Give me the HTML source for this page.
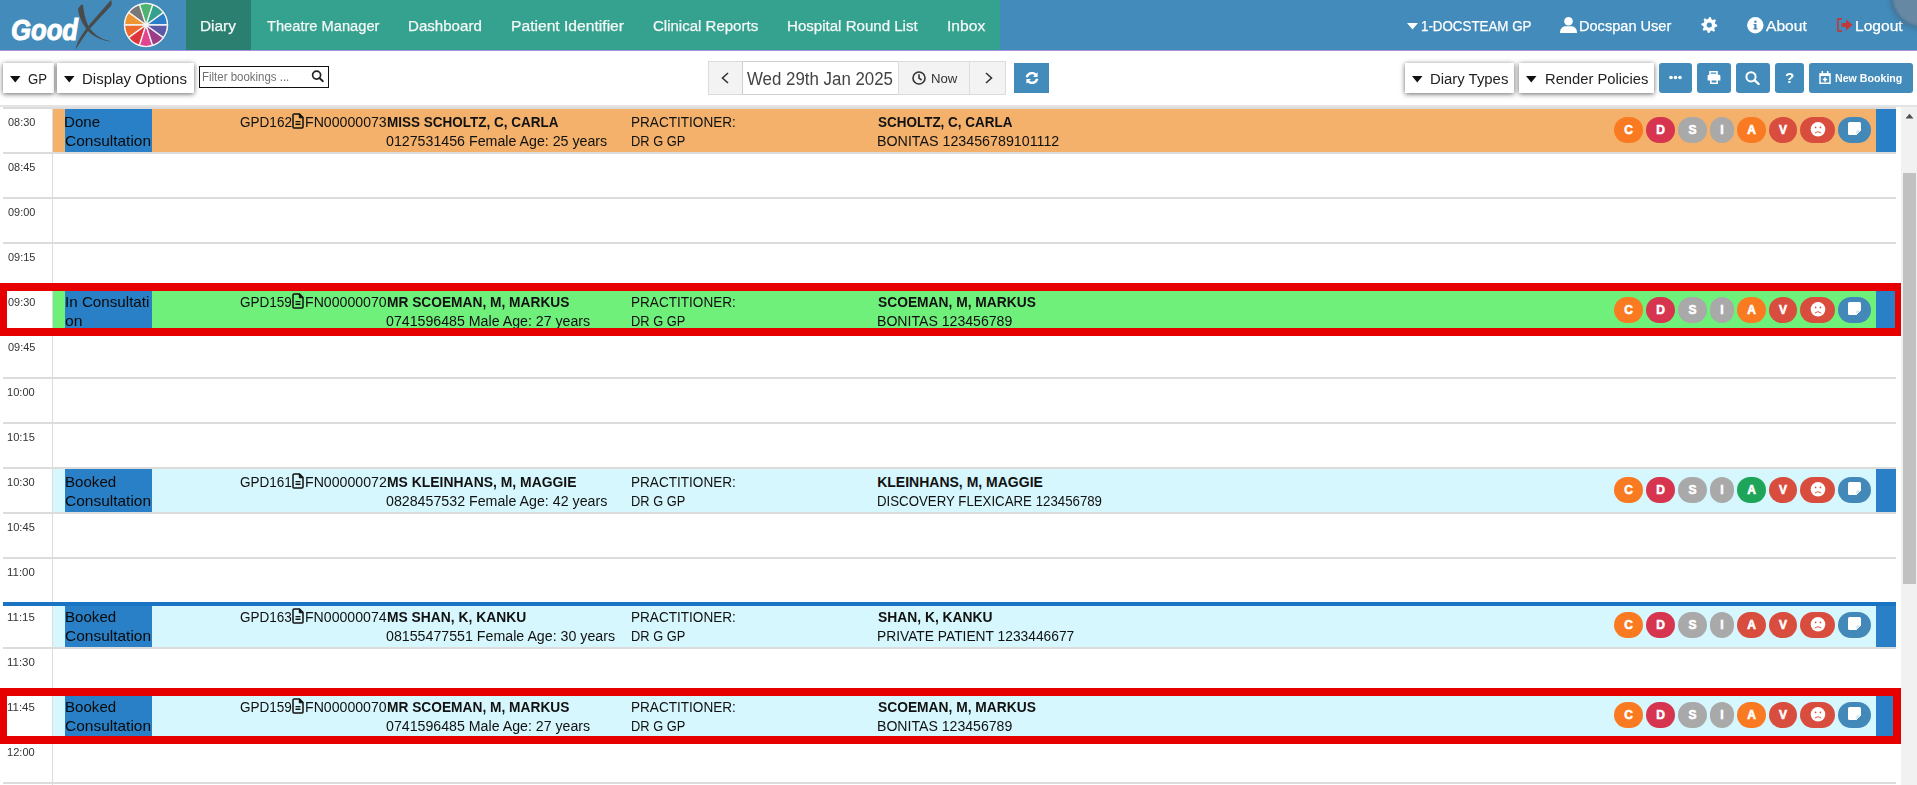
<!DOCTYPE html><html><head><meta charset="utf-8"><title>GoodX Diary</title><style>*{margin:0;padding:0;box-sizing:border-box}
html,body{width:1917px;height:785px;overflow:hidden;background:#fff;font-family:"Liberation Sans",sans-serif}
.a{position:absolute}
.t{position:absolute;line-height:0;white-space:nowrap;transform-origin:0 0}
.ic{height:26px;border-radius:13px;color:#fff;font-weight:700;font-size:12px;-webkit-text-stroke:0.6px #fff;line-height:26px;text-align:center}
</style></head><body><div class="a" style="left:0px;top:0px;width:1917px;height:50px;background:#428bba;"></div>
<div class="a" style="left:0px;top:50px;width:1917px;height:1px;background:#a692dc;"></div>
<div class="a" style="left:186px;top:0px;width:65px;height:50px;background:#2a7f70;"></div>
<div class="a" style="left:251px;top:0px;width:749px;height:50px;background:#35a18f;"></div>
<svg class="a" style="left:0;top:0" width="180" height="50" viewBox="0 0 180 50"><text x="11" y="40" font-family="Liberation Sans" font-weight="700" font-style="italic" font-size="29" fill="#fff" stroke="#fff" stroke-width="1" textLength="67" lengthAdjust="spacingAndGlyphs">Good</text><path d="M78,9 C80,5 82,4 83,5 C84,12 85,20 89,27 C95,36 103,40 112,41.5 C104,41 95,38 88,31 C82,24 79,16 78,9 Z" fill="#4a4a4a"/><path d="M111,0 C112,2 112,4 111,6 C105,12 96,22 88,31 C83,38 79,44 75.5,49.5 C77,43 80,37 86,29 C94,19 103,9 111,0 Z" fill="#4a4a4a"/><path d="M146,25 L167.50,25.00 A21.5,21.5 0 0 0 163.39,12.36 Z" fill="#2a7fc6" stroke="#f4f4f4" stroke-width="1.3"/><path d="M146,25 L163.39,12.36 A21.5,21.5 0 0 0 152.64,4.55 Z" fill="#35a08e" stroke="#f4f4f4" stroke-width="1.3"/><path d="M146,25 L152.64,4.55 A21.5,21.5 0 0 0 139.36,4.55 Z" fill="#4cb46e" stroke="#f4f4f4" stroke-width="1.3"/><path d="M146,25 L139.36,4.55 A21.5,21.5 0 0 0 128.61,12.36 Z" fill="#777777" stroke="#f4f4f4" stroke-width="1.3"/><path d="M146,25 L128.61,12.36 A21.5,21.5 0 0 0 124.50,25.00 Z" fill="#ef9433" stroke="#f4f4f4" stroke-width="1.3"/><path d="M146,25 L124.50,25.00 A21.5,21.5 0 0 0 128.61,37.64 Z" fill="#ee6a2c" stroke="#f4f4f4" stroke-width="1.3"/><path d="M146,25 L128.61,37.64 A21.5,21.5 0 0 0 139.36,45.45 Z" fill="#dd3539" stroke="#f4f4f4" stroke-width="1.3"/><path d="M146,25 L139.36,45.45 A21.5,21.5 0 0 0 152.64,45.45 Z" fill="#e2458f" stroke="#f4f4f4" stroke-width="1.3"/><path d="M146,25 L152.64,45.45 A21.5,21.5 0 0 0 163.39,37.64 Z" fill="#9c3e86" stroke="#f4f4f4" stroke-width="1.3"/><path d="M146,25 L163.39,37.64 A21.5,21.5 0 0 0 167.50,25.00 Z" fill="#5a5aa8" stroke="#f4f4f4" stroke-width="1.3"/><circle cx="146" cy="25" r="21.5" fill="none" stroke="#f0f0f0" stroke-width="1"/></svg>
<span class="t" style="left:200.37px;top:25.50px;font-size:15.5px;color:#f4f8f7;transform:scaleX(0.9928);-webkit-text-stroke:0.25px #f4f8f7;">Diary</span>
<span class="t" style="left:267.01px;top:25.50px;font-size:15.5px;color:#f4f8f7;transform:scaleX(0.9456);-webkit-text-stroke:0.25px #f4f8f7;">Theatre Manager</span>
<span class="t" style="left:408.49px;top:25.50px;font-size:15.5px;color:#f4f8f7;transform:scaleX(0.9735);-webkit-text-stroke:0.25px #f4f8f7;">Dashboard</span>
<span class="t" style="left:511.25px;top:25.50px;font-size:15.5px;color:#f4f8f7;transform:scaleX(1.0089);-webkit-text-stroke:0.25px #f4f8f7;">Patient Identifier</span>
<span class="t" style="left:653.15px;top:25.50px;font-size:15.5px;color:#f4f8f7;transform:scaleX(0.9687);-webkit-text-stroke:0.25px #f4f8f7;">Clinical Reports</span>
<span class="t" style="left:787.39px;top:25.50px;font-size:15.5px;color:#f4f8f7;transform:scaleX(0.9724);-webkit-text-stroke:0.25px #f4f8f7;">Hospital Round List</span>
<span class="t" style="left:947.09px;top:25.50px;font-size:15.5px;color:#f4f8f7;transform:scaleX(1.0097);-webkit-text-stroke:0.25px #f4f8f7;">Inbox</span>
<span class="t" style="left:1420.50px;top:25.50px;font-size:15px;color:#fff;transform:scaleX(0.8892);-webkit-text-stroke:0.25px #fff;">1-DOCSTEAM GP</span>
<span class="t" style="left:1579.43px;top:25.50px;font-size:15.5px;color:#fff;transform:scaleX(0.9398);-webkit-text-stroke:0.25px #fff;">Docspan User</span>
<span class="t" style="left:1766.40px;top:25.50px;font-size:15.5px;color:#fff;transform:scaleX(1.0055);-webkit-text-stroke:0.25px #fff;">About</span>
<span class="t" style="left:1854.75px;top:25.50px;font-size:15.5px;color:#fff;transform:scaleX(1.0058);-webkit-text-stroke:0.25px #fff;">Logout</span>
<svg class="a" style="left:1407px;top:23px" width="11" height="7"><path d="M0,0 H11 L5.5,6.5 Z" fill="#fff"/></svg>
<svg class="a" style="left:1560px;top:17px" width="17" height="16" viewBox="0 0 17 16"><circle cx="8.5" cy="4.3" r="4.3" fill="#fff"/><path d="M0,16 C0,11 3,9.3 6,9.3 H11 C14,9.3 17,11 17,16 Z" fill="#fff"/></svg>
<svg class="a" style="left:1701px;top:17px" width="17" height="16" viewBox="0 0 17 16"><path d="M16.30,8.00 L16.15,9.56 L13.84,10.30 L13.29,11.33 L13.96,13.66 L12.74,14.65 L10.60,13.54 L9.47,13.88 L8.30,16.00 L6.74,15.85 L6.00,13.54 L4.97,12.99 L2.64,13.66 L1.65,12.44 L2.76,10.30 L2.42,9.17 L0.30,8.00 L0.45,6.44 L2.76,5.70 L3.31,4.67 L2.64,2.34 L3.86,1.35 L6.00,2.46 L7.13,2.12 L8.30,0.00 L9.86,0.15 L10.60,2.46 L11.63,3.01 L13.96,2.34 L14.95,3.56 L13.84,5.70 L14.18,6.83 Z" fill="#fff"/><circle cx="8.3" cy="8" r="2.6" fill="#428bba"/></svg>
<svg class="a" style="left:1747px;top:17px" width="17" height="17" viewBox="0 0 17 17"><circle cx="8.3" cy="8.3" r="8.2" fill="#fff"/><rect x="7.3" y="7" width="2.2" height="5.2" fill="#428bba"/><rect x="6.3" y="11.2" width="4.2" height="1.2" fill="#428bba"/><rect x="6.5" y="7" width="2" height="1.1" fill="#428bba"/><circle cx="8.4" cy="4.8" r="1.2" fill="#428bba"/></svg>
<svg class="a" style="left:1837px;top:18px" width="17" height="14" viewBox="0 0 17 14"><path d="M5,0.8 H2 Q0.8,0.8 0.8,2 V12 Q0.8,13.2 2,13.2 H5" fill="none" stroke="#c0393b" stroke-width="1.7"/><path d="M4.5,5 H9 V1.5 L15.5,7 L9,12.5 V9 H4.5 Z" fill="#c0393b"/></svg>
<div class="a" style="left:1893px;top:-32px;width:58px;height:58px;border-radius:50%;background:#6688a2;box-shadow:0 0 4px 3px rgba(70,95,120,0.6);filter:blur(1px)"></div>
<div class="a" style="left:3px;top:63px;width:51px;height:30px;background:#fff;box-shadow:0 1px 5px 0 rgba(0,0,0,0.6);"></div>
<div class="a" style="left:57px;top:63px;width:137px;height:30px;background:#fff;box-shadow:0 1px 5px 0 rgba(0,0,0,0.6);"></div>
<svg class="a" style="left:10px;top:76px" width="11" height="7"><path d="M0,0 H10.5 L5.25,6.6 Z" fill="#111"/></svg>
<svg class="a" style="left:64px;top:76px" width="11" height="7"><path d="M0,0 H10.5 L5.25,6.6 Z" fill="#111"/></svg>
<span class="t" style="left:28.04px;top:78.80px;font-size:14px;color:#222;transform:scaleX(0.9400);">GP</span>
<span class="t" style="left:82.30px;top:78.80px;font-size:14px;color:#222;transform:scaleX(1.0699);">Display Options</span>
<div class="a" style="left:199px;top:66px;width:130px;height:22px;background:#fff;border:1.5px solid #111;"></div>
<span class="t" style="left:201.78px;top:77.20px;font-size:12px;color:#727272;transform:scaleX(0.9554);">Filter bookings ...</span>
<svg class="a" style="left:311px;top:70px" width="14" height="13" viewBox="0 0 14 13"><circle cx="5.6" cy="5.1" r="4" fill="none" stroke="#222" stroke-width="1.7"/><path d="M8.4,8 L11.9,11.2" stroke="#222" stroke-width="1.9" stroke-linecap="round"/></svg>
<div class="a" style="left:708px;top:61px;width:35px;height:34px;background:#f3f3f3;border:1px solid #dcdcdc;"></div>
<div class="a" style="left:742px;top:61px;width:157px;height:34px;background:#fff;border:1px solid #cfcfcf;"></div>
<div class="a" style="left:898px;top:61px;width:72px;height:34px;background:#f3f3f3;border:1px solid #dcdcdc;"></div>
<div class="a" style="left:969px;top:61px;width:37px;height:34px;background:#f3f3f3;border:1px solid #dcdcdc;"></div>
<svg class="a" style="left:720px;top:72px" width="10" height="12" viewBox="0 0 10 12"><path d="M8,1 L2.5,6 L8,11" fill="none" stroke="#333" stroke-width="1.6"/></svg>
<svg class="a" style="left:984px;top:72px" width="10" height="12" viewBox="0 0 10 12"><path d="M2,1 L7.5,6 L2,11" fill="none" stroke="#333" stroke-width="1.6"/></svg>
<span class="t" style="left:746.92px;top:79.40px;font-size:17.5px;color:#444;transform:scaleX(0.9637);">Wed 29th Jan 2025</span>
<svg class="a" style="left:912px;top:71px" width="15" height="14" viewBox="0 0 15 14"><circle cx="7" cy="7" r="6" fill="none" stroke="#333" stroke-width="1.6"/><path d="M7,3.3 V7.2 L9.6,9" fill="none" stroke="#333" stroke-width="1.6"/></svg>
<span class="t" style="left:931.34px;top:79.00px;font-size:12.5px;color:#333;transform:scaleX(1.0556);">Now</span>
<div class="a" style="left:1014px;top:63px;width:35px;height:30px;background:#428bba;"></div>
<svg class="a" style="left:1025px;top:72px" width="14" height="12" viewBox="0 0 14 12"><path d="M1.8,5.2 A5.3,5.3 0 0 1 11,3" fill="none" stroke="#fff" stroke-width="2.4"/><path d="M12.6,0.3 V5 H8 Z" fill="#fff"/><path d="M12.2,6.8 A5.3,5.3 0 0 1 3,9" fill="none" stroke="#fff" stroke-width="2.4"/><path d="M1.4,11.7 V7 H6 Z" fill="#fff"/></svg>
<div class="a" style="left:1405px;top:63px;width:109px;height:30px;background:#fff;box-shadow:0 1px 5px 0 rgba(0,0,0,0.6);"></div>
<div class="a" style="left:1519px;top:63px;width:135px;height:30px;background:#fff;box-shadow:0 1px 5px 0 rgba(0,0,0,0.6);"></div>
<svg class="a" style="left:1412px;top:76px" width="11" height="7"><path d="M0,0 H10.5 L5.25,6.6 Z" fill="#111"/></svg>
<svg class="a" style="left:1526px;top:76px" width="11" height="7"><path d="M0,0 H10.5 L5.25,6.6 Z" fill="#111"/></svg>
<span class="t" style="left:1429.51px;top:78.60px;font-size:14px;color:#222;transform:scaleX(1.0634);">Diary Types</span>
<span class="t" style="left:1544.62px;top:78.60px;font-size:14px;color:#222;transform:scaleX(1.0533);">Render Policies</span>
<div class="a" style="left:1659px;top:63px;width:33px;height:30px;background:#428bba;border-radius:3px;"></div>
<div class="a" style="left:1697px;top:63px;width:34px;height:30px;background:#428bba;border-radius:3px;"></div>
<div class="a" style="left:1736px;top:63px;width:34px;height:30px;background:#428bba;border-radius:3px;"></div>
<div class="a" style="left:1775px;top:63px;width:29px;height:30px;background:#428bba;border-radius:3px;"></div>
<div class="a" style="left:1809px;top:63px;width:104px;height:30px;background:#428bba;border-radius:3px;"></div>
<svg class="a" style="left:1669px;top:75px" width="13" height="5"><circle cx="2" cy="2.5" r="1.8" fill="#fff"/><circle cx="6.5" cy="2.5" r="1.8" fill="#fff"/><circle cx="11" cy="2.5" r="1.8" fill="#fff"/></svg>
<svg class="a" style="left:1707px;top:71px" width="14" height="13" viewBox="0 0 14 13"><path d="M3,0.8 H10 V3.5 H3 Z" fill="none" stroke="#fff" stroke-width="1.6"/><path d="M2,3.8 H12 Q13.4,3.8 13.4,5.2 V9.5 H11 V8 H3 V9.5 H0.6 V5.2 Q0.6,3.8 2,3.8 Z" fill="#fff"/><path d="M3.8,8.8 H10.2 V12.2 H3.8 Z" fill="none" stroke="#fff" stroke-width="1.6"/></svg>
<svg class="a" style="left:1745px;top:71px" width="15" height="14" viewBox="0 0 15 14"><circle cx="6" cy="5.8" r="4.6" fill="none" stroke="#fff" stroke-width="2"/><path d="M9.5,9.2 L13.6,13" stroke="#fff" stroke-width="2.3" stroke-linecap="round"/></svg>
<span class="t" style="left:1784.71px;top:78.00px;font-size:14px;font-weight:700;color:#fff;transform:scaleX(1.0924);">?</span>
<svg class="a" style="left:1819px;top:71px" width="12" height="13" viewBox="0 0 12 13"><path d="M1,3 H11 V12.2 H1 Z" fill="none" stroke="#fff" stroke-width="1.5"/><rect x="1" y="2.5" width="10" height="2.5" fill="#fff"/><rect x="2.6" y="0" width="1.5" height="3" fill="#fff"/><rect x="7.9" y="0" width="1.5" height="3" fill="#fff"/><path d="M6,6.3 V10.7 M3.8,8.5 H8.2" stroke="#fff" stroke-width="1.5"/></svg>
<span class="t" style="left:1835.31px;top:78.40px;font-size:11.5px;font-weight:700;color:#fff;transform:scaleX(0.9249);">New Booking</span>
<div class="a" style="left:0px;top:105px;width:1917px;height:2px;background:#e4e4e4;"></div>
<div class="a" style="left:52px;top:109px;width:1px;height:676px;background:#dcdcdc;"></div>
<div class="a" style="left:3px;top:107px;width:1893px;height:2px;background:#dcdcdc;"></div>
<div class="a" style="left:3px;top:152px;width:1893px;height:2px;background:#dcdcdc;"></div>
<div class="a" style="left:3px;top:197px;width:1893px;height:2px;background:#dcdcdc;"></div>
<div class="a" style="left:3px;top:242px;width:1893px;height:2px;background:#dcdcdc;"></div>
<div class="a" style="left:3px;top:287px;width:1893px;height:2px;background:#dcdcdc;"></div>
<div class="a" style="left:3px;top:332px;width:1893px;height:2px;background:#dcdcdc;"></div>
<div class="a" style="left:3px;top:377px;width:1893px;height:2px;background:#dcdcdc;"></div>
<div class="a" style="left:3px;top:422px;width:1893px;height:2px;background:#dcdcdc;"></div>
<div class="a" style="left:3px;top:467px;width:1893px;height:2px;background:#dcdcdc;"></div>
<div class="a" style="left:3px;top:512px;width:1893px;height:2px;background:#dcdcdc;"></div>
<div class="a" style="left:3px;top:557px;width:1893px;height:2px;background:#dcdcdc;"></div>
<div class="a" style="left:3px;top:602px;width:1893px;height:2px;background:#dcdcdc;"></div>
<div class="a" style="left:3px;top:647px;width:1893px;height:2px;background:#dcdcdc;"></div>
<div class="a" style="left:3px;top:692px;width:1893px;height:2px;background:#dcdcdc;"></div>
<div class="a" style="left:3px;top:737px;width:1893px;height:2px;background:#dcdcdc;"></div>
<div class="a" style="left:3px;top:782px;width:1893px;height:2px;background:#dcdcdc;"></div>
<span class="t" style="left:7.76px;top:122.00px;font-size:11px;color:#333;transform:scaleX(0.9934);">08:30</span>
<span class="t" style="left:7.76px;top:167.00px;font-size:11px;color:#333;transform:scaleX(0.9955);">08:45</span>
<span class="t" style="left:7.76px;top:212.00px;font-size:11px;color:#333;transform:scaleX(0.9934);">09:00</span>
<span class="t" style="left:7.76px;top:257.00px;font-size:11px;color:#333;transform:scaleX(0.9955);">09:15</span>
<span class="t" style="left:7.76px;top:302.00px;font-size:11px;color:#333;transform:scaleX(0.9934);">09:30</span>
<span class="t" style="left:7.76px;top:347.00px;font-size:11px;color:#333;transform:scaleX(0.9955);">09:45</span>
<span class="t" style="left:7.37px;top:392.00px;font-size:11px;color:#333;transform:scaleX(1.0080);">10:00</span>
<span class="t" style="left:7.37px;top:437.00px;font-size:11px;color:#333;transform:scaleX(1.0101);">10:15</span>
<span class="t" style="left:7.37px;top:482.00px;font-size:11px;color:#333;transform:scaleX(1.0080);">10:30</span>
<span class="t" style="left:7.37px;top:527.00px;font-size:11px;color:#333;transform:scaleX(1.0101);">10:45</span>
<span class="t" style="left:7.34px;top:572.00px;font-size:11px;color:#333;transform:scaleX(1.0406);">11:00</span>
<span class="t" style="left:7.34px;top:617.00px;font-size:11px;color:#333;transform:scaleX(1.0429);">11:15</span>
<span class="t" style="left:7.34px;top:662.00px;font-size:11px;color:#333;transform:scaleX(1.0406);">11:30</span>
<span class="t" style="left:7.34px;top:707.00px;font-size:11px;color:#333;transform:scaleX(1.0429);">11:45</span>
<span class="t" style="left:7.37px;top:752.00px;font-size:11px;color:#333;transform:scaleX(1.0080);">12:00</span>
<div class="a" style="left:53px;top:109px;width:1843px;height:43px;background:#f3b16b;"></div>
<div class="a" style="left:65px;top:109px;width:87px;height:43px;background:#2a80c6;"></div>
<div class="a" style="left:1876px;top:109px;width:20px;height:43px;background:#2a80c6;"></div>
<span class="t" style="left:64.29px;top:121.80px;font-size:14.5px;color:#0a0a0a;transform:scaleX(1.0413);">Done</span>
<span class="t" style="left:64.83px;top:140.60px;font-size:14.5px;color:#0a0a0a;transform:scaleX(1.0677);">Consultation</span>
<span class="t" style="left:240.32px;top:121.80px;font-size:14px;color:#111;transform:scaleX(0.9677);">GPD162</span>
<svg class="a" style="left:292px;top:113px" width="12" height="16" viewBox="0 0 12 16"><path d="M1.5,1 H7.5 L11,4.5 V14 Q11,15 10,15 H2 Q1,15 1,14 V2 Q1,1 2,1 Z" fill="none" stroke="#111" stroke-width="1.5"/><path d="M7.3,1 V4.8 H11" fill="#111" stroke="#111" stroke-width="1"/><path d="M3.5,8.6 H8.5 M3.5,11.2 H8.5" stroke="#111" stroke-width="1.4"/></svg>
<span class="t" style="left:304.87px;top:121.80px;font-size:14px;color:#111;transform:scaleX(1.0096);">FN00000073</span>
<span class="t" style="left:386.62px;top:121.80px;font-size:14px;font-weight:700;color:#111;transform:scaleX(0.9641);">MISS SCHOLTZ, C, CARLA</span>
<span class="t" style="left:386.23px;top:140.60px;font-size:14px;color:#111;transform:scaleX(1.0149);">0127531456 Female Age: 25 years</span>
<span class="t" style="left:631.41px;top:121.80px;font-size:14px;color:#111;transform:scaleX(0.9697);">PRACTITIONER:</span>
<span class="t" style="left:631.47px;top:140.60px;font-size:14px;color:#111;transform:scaleX(0.9186);">DR G GP</span>
<span class="t" style="left:877.70px;top:121.80px;font-size:14px;font-weight:700;color:#111;transform:scaleX(0.9622);">SCHOLTZ, C, CARLA</span>
<span class="t" style="left:877.36px;top:140.60px;font-size:14px;color:#111;transform:scaleX(1.0182);">BONITAS 123456789101112</span>
<div class="a ic" style="left:1614px;top:117px;width:29px;background:#fa7a22">C</div>
<div class="a ic" style="left:1646px;top:117px;width:29px;background:#d6344f">D</div>
<div class="a ic" style="left:1678px;top:117px;width:29px;background:#a9a9a9">S</div>
<div class="a ic" style="left:1710px;top:117px;width:24px;background:#a9a9a9">I</div>
<div class="a ic" style="left:1737px;top:117px;width:29px;background:#fa7a22">A</div>
<div class="a ic" style="left:1769px;top:117px;width:28px;background:#d94d3e">V</div>
<div class="a ic" style="left:1800px;top:117px;width:35px;background:#d94d3e"><svg style="position:absolute;left:9.5px;top:4.5px" width="16" height="15" viewBox="0 0 16 15"><circle cx="8" cy="7.3" r="7.3" fill="#fff"/><circle cx="5.6" cy="5.4" r="0.85" fill="#d94d3e"/><circle cx="10.4" cy="5.4" r="0.85" fill="#d94d3e"/><path d="M4.8,11 Q8,8.3 11.2,11" fill="none" stroke="#d94d3e" stroke-width="0.95"/></svg></div>
<div class="a ic" style="left:1838px;top:117px;width:33px;background:#4289ba"><svg style="position:absolute;left:10px;top:5px" width="14" height="14" viewBox="0 0 14 14"><path d="M1.5,0 H11.5 Q13,0 13,1.5 V8 L8,13 H1.5 Q0,13 0,11.5 V1.5 Q0,0 1.5,0 Z" fill="#fff"/><path d="M13,8 L8,13 V9.6 Q8,8 9.6,8 Z" fill="#cfe1f0" stroke="#fff" stroke-width="0.8"/></svg></div>
<div class="a" style="left:53px;top:289px;width:1843px;height:43px;background:#6ff07a;"></div>
<div class="a" style="left:65px;top:289px;width:87px;height:43px;background:#2a80c6;"></div>
<div class="a" style="left:1876px;top:289px;width:20px;height:43px;background:#2a80c6;"></div>
<span class="t" style="left:64.83px;top:301.80px;font-size:14.5px;color:#0a0a0a;transform:scaleX(1.0473);">In Consultati</span>
<span class="t" style="left:64.97px;top:320.60px;font-size:14.5px;color:#0a0a0a;transform:scaleX(1.0842);">on</span>
<span class="t" style="left:240.32px;top:301.80px;font-size:14px;color:#111;transform:scaleX(0.9664);">GPD159</span>
<svg class="a" style="left:292px;top:293px" width="12" height="16" viewBox="0 0 12 16"><path d="M1.5,1 H7.5 L11,4.5 V14 Q11,15 10,15 H2 Q1,15 1,14 V2 Q1,1 2,1 Z" fill="none" stroke="#111" stroke-width="1.5"/><path d="M7.3,1 V4.8 H11" fill="#111" stroke="#111" stroke-width="1"/><path d="M3.5,8.6 H8.5 M3.5,11.2 H8.5" stroke="#111" stroke-width="1.4"/></svg>
<span class="t" style="left:304.87px;top:301.80px;font-size:14px;color:#111;transform:scaleX(1.0087);">FN00000070</span>
<span class="t" style="left:386.61px;top:301.80px;font-size:14px;font-weight:700;color:#111;transform:scaleX(0.9813);">MR SCOEMAN, M, MARKUS</span>
<span class="t" style="left:386.23px;top:320.60px;font-size:14px;color:#111;transform:scaleX(1.0127);">0741596485 Male Age: 27 years</span>
<span class="t" style="left:631.41px;top:301.80px;font-size:14px;color:#111;transform:scaleX(0.9697);">PRACTITIONER:</span>
<span class="t" style="left:631.47px;top:320.60px;font-size:14px;color:#111;transform:scaleX(0.9186);">DR G GP</span>
<span class="t" style="left:877.69px;top:301.80px;font-size:14px;font-weight:700;color:#111;transform:scaleX(0.9854);">SCOEMAN, M, MARKUS</span>
<span class="t" style="left:877.37px;top:320.60px;font-size:14px;color:#111;transform:scaleX(1.0064);">BONITAS 123456789</span>
<div class="a ic" style="left:1614px;top:297px;width:29px;background:#fa7a22">C</div>
<div class="a ic" style="left:1646px;top:297px;width:29px;background:#d6344f">D</div>
<div class="a ic" style="left:1678px;top:297px;width:29px;background:#a9a9a9">S</div>
<div class="a ic" style="left:1710px;top:297px;width:24px;background:#a9a9a9">I</div>
<div class="a ic" style="left:1737px;top:297px;width:29px;background:#fa7a22">A</div>
<div class="a ic" style="left:1769px;top:297px;width:28px;background:#d94d3e">V</div>
<div class="a ic" style="left:1800px;top:297px;width:35px;background:#d94d3e"><svg style="position:absolute;left:9.5px;top:4.5px" width="16" height="15" viewBox="0 0 16 15"><circle cx="8" cy="7.3" r="7.3" fill="#fff"/><circle cx="5.6" cy="5.4" r="0.85" fill="#d94d3e"/><circle cx="10.4" cy="5.4" r="0.85" fill="#d94d3e"/><path d="M4.8,11 Q8,8.3 11.2,11" fill="none" stroke="#d94d3e" stroke-width="0.95"/></svg></div>
<div class="a ic" style="left:1838px;top:297px;width:33px;background:#4289ba"><svg style="position:absolute;left:10px;top:5px" width="14" height="14" viewBox="0 0 14 14"><path d="M1.5,0 H11.5 Q13,0 13,1.5 V8 L8,13 H1.5 Q0,13 0,11.5 V1.5 Q0,0 1.5,0 Z" fill="#fff"/><path d="M13,8 L8,13 V9.6 Q8,8 9.6,8 Z" fill="#cfe1f0" stroke="#fff" stroke-width="0.8"/></svg></div>
<div class="a" style="left:53px;top:469px;width:1843px;height:43px;background:#d6f7fd;"></div>
<div class="a" style="left:65px;top:469px;width:87px;height:43px;background:#2a80c6;"></div>
<div class="a" style="left:1876px;top:469px;width:20px;height:43px;background:#2a80c6;"></div>
<span class="t" style="left:64.99px;top:481.80px;font-size:14.5px;color:#0a0a0a;transform:scaleX(1.0414);">Booked</span>
<span class="t" style="left:64.83px;top:500.60px;font-size:14.5px;color:#0a0a0a;transform:scaleX(1.0677);">Consultation</span>
<span class="t" style="left:240.32px;top:481.80px;font-size:14px;color:#111;transform:scaleX(0.9664);">GPD161</span>
<svg class="a" style="left:292px;top:473px" width="12" height="16" viewBox="0 0 12 16"><path d="M1.5,1 H7.5 L11,4.5 V14 Q11,15 10,15 H2 Q1,15 1,14 V2 Q1,1 2,1 Z" fill="none" stroke="#111" stroke-width="1.5"/><path d="M7.3,1 V4.8 H11" fill="#111" stroke="#111" stroke-width="1"/><path d="M3.5,8.6 H8.5 M3.5,11.2 H8.5" stroke="#111" stroke-width="1.4"/></svg>
<span class="t" style="left:304.87px;top:481.80px;font-size:14px;color:#111;transform:scaleX(1.0114);">FN00000072</span>
<span class="t" style="left:386.60px;top:481.80px;font-size:14px;font-weight:700;color:#111;transform:scaleX(0.9945);">MS KLEINHANS, M, MAGGIE</span>
<span class="t" style="left:386.23px;top:500.60px;font-size:14px;color:#111;transform:scaleX(1.0154);">0828457532 Female Age: 42 years</span>
<span class="t" style="left:631.41px;top:481.80px;font-size:14px;color:#111;transform:scaleX(0.9697);">PRACTITIONER:</span>
<span class="t" style="left:631.47px;top:500.60px;font-size:14px;color:#111;transform:scaleX(0.9186);">DR G GP</span>
<span class="t" style="left:877.19px;top:481.80px;font-size:14px;font-weight:700;color:#111;">KLEINHANS, M, MAGGIE</span>
<span class="t" style="left:877.44px;top:500.60px;font-size:14px;color:#111;transform:scaleX(0.9469);">DISCOVERY FLEXICARE 123456789</span>
<div class="a ic" style="left:1614px;top:477px;width:29px;background:#fa7a22">C</div>
<div class="a ic" style="left:1646px;top:477px;width:29px;background:#d6344f">D</div>
<div class="a ic" style="left:1678px;top:477px;width:29px;background:#a9a9a9">S</div>
<div class="a ic" style="left:1710px;top:477px;width:24px;background:#a9a9a9">I</div>
<div class="a ic" style="left:1737px;top:477px;width:29px;background:#1fa55a">A</div>
<div class="a ic" style="left:1769px;top:477px;width:28px;background:#d94d3e">V</div>
<div class="a ic" style="left:1800px;top:477px;width:35px;background:#d94d3e"><svg style="position:absolute;left:9.5px;top:4.5px" width="16" height="15" viewBox="0 0 16 15"><circle cx="8" cy="7.3" r="7.3" fill="#fff"/><circle cx="5.6" cy="5.4" r="0.85" fill="#d94d3e"/><circle cx="10.4" cy="5.4" r="0.85" fill="#d94d3e"/><path d="M4.8,11 Q8,8.3 11.2,11" fill="none" stroke="#d94d3e" stroke-width="0.95"/></svg></div>
<div class="a ic" style="left:1838px;top:477px;width:33px;background:#4289ba"><svg style="position:absolute;left:10px;top:5px" width="14" height="14" viewBox="0 0 14 14"><path d="M1.5,0 H11.5 Q13,0 13,1.5 V8 L8,13 H1.5 Q0,13 0,11.5 V1.5 Q0,0 1.5,0 Z" fill="#fff"/><path d="M13,8 L8,13 V9.6 Q8,8 9.6,8 Z" fill="#cfe1f0" stroke="#fff" stroke-width="0.8"/></svg></div>
<div class="a" style="left:53px;top:604px;width:1843px;height:43px;background:#d6f7fd;"></div>
<div class="a" style="left:65px;top:604px;width:87px;height:43px;background:#2a80c6;"></div>
<div class="a" style="left:1876px;top:604px;width:20px;height:43px;background:#2a80c6;"></div>
<span class="t" style="left:64.99px;top:616.80px;font-size:14.5px;color:#0a0a0a;transform:scaleX(1.0414);">Booked</span>
<span class="t" style="left:64.83px;top:635.60px;font-size:14.5px;color:#0a0a0a;transform:scaleX(1.0677);">Consultation</span>
<span class="t" style="left:240.32px;top:616.80px;font-size:14px;color:#111;transform:scaleX(0.9651);">GPD163</span>
<svg class="a" style="left:292px;top:608px" width="12" height="16" viewBox="0 0 12 16"><path d="M1.5,1 H7.5 L11,4.5 V14 Q11,15 10,15 H2 Q1,15 1,14 V2 Q1,1 2,1 Z" fill="none" stroke="#111" stroke-width="1.5"/><path d="M7.3,1 V4.8 H11" fill="#111" stroke="#111" stroke-width="1"/><path d="M3.5,8.6 H8.5 M3.5,11.2 H8.5" stroke="#111" stroke-width="1.4"/></svg>
<span class="t" style="left:304.87px;top:616.80px;font-size:14px;color:#111;transform:scaleX(1.0078);">FN00000074</span>
<span class="t" style="left:386.60px;top:616.80px;font-size:14px;font-weight:700;color:#111;transform:scaleX(0.9883);">MS SHAN, K, KANKU</span>
<span class="t" style="left:386.23px;top:635.60px;font-size:14px;color:#111;transform:scaleX(1.0147);">08155477551 Female Age: 30 years</span>
<span class="t" style="left:631.41px;top:616.80px;font-size:14px;color:#111;transform:scaleX(0.9697);">PRACTITIONER:</span>
<span class="t" style="left:631.47px;top:635.60px;font-size:14px;color:#111;transform:scaleX(0.9186);">DR G GP</span>
<span class="t" style="left:877.68px;top:616.80px;font-size:14px;font-weight:700;color:#111;transform:scaleX(0.9887);">SHAN, K, KANKU</span>
<span class="t" style="left:877.40px;top:635.60px;font-size:14px;color:#111;transform:scaleX(0.9851);">PRIVATE PATIENT 1233446677</span>
<div class="a ic" style="left:1614px;top:612px;width:29px;background:#fa7a22">C</div>
<div class="a ic" style="left:1646px;top:612px;width:29px;background:#d6344f">D</div>
<div class="a ic" style="left:1678px;top:612px;width:29px;background:#a9a9a9">S</div>
<div class="a ic" style="left:1710px;top:612px;width:24px;background:#a9a9a9">I</div>
<div class="a ic" style="left:1737px;top:612px;width:29px;background:#d94d3e">A</div>
<div class="a ic" style="left:1769px;top:612px;width:28px;background:#d94d3e">V</div>
<div class="a ic" style="left:1800px;top:612px;width:35px;background:#d94d3e"><svg style="position:absolute;left:9.5px;top:4.5px" width="16" height="15" viewBox="0 0 16 15"><circle cx="8" cy="7.3" r="7.3" fill="#fff"/><circle cx="5.6" cy="5.4" r="0.85" fill="#d94d3e"/><circle cx="10.4" cy="5.4" r="0.85" fill="#d94d3e"/><path d="M4.8,11 Q8,8.3 11.2,11" fill="none" stroke="#d94d3e" stroke-width="0.95"/></svg></div>
<div class="a ic" style="left:1838px;top:612px;width:33px;background:#4289ba"><svg style="position:absolute;left:10px;top:5px" width="14" height="14" viewBox="0 0 14 14"><path d="M1.5,0 H11.5 Q13,0 13,1.5 V8 L8,13 H1.5 Q0,13 0,11.5 V1.5 Q0,0 1.5,0 Z" fill="#fff"/><path d="M13,8 L8,13 V9.6 Q8,8 9.6,8 Z" fill="#cfe1f0" stroke="#fff" stroke-width="0.8"/></svg></div>
<div class="a" style="left:53px;top:694px;width:1843px;height:43px;background:#d6f7fd;"></div>
<div class="a" style="left:65px;top:694px;width:87px;height:43px;background:#2a80c6;"></div>
<div class="a" style="left:1876px;top:694px;width:20px;height:43px;background:#2a80c6;"></div>
<span class="t" style="left:64.99px;top:706.80px;font-size:14.5px;color:#0a0a0a;transform:scaleX(1.0414);">Booked</span>
<span class="t" style="left:64.83px;top:725.60px;font-size:14.5px;color:#0a0a0a;transform:scaleX(1.0677);">Consultation</span>
<span class="t" style="left:240.32px;top:706.80px;font-size:14px;color:#111;transform:scaleX(0.9664);">GPD159</span>
<svg class="a" style="left:292px;top:698px" width="12" height="16" viewBox="0 0 12 16"><path d="M1.5,1 H7.5 L11,4.5 V14 Q11,15 10,15 H2 Q1,15 1,14 V2 Q1,1 2,1 Z" fill="none" stroke="#111" stroke-width="1.5"/><path d="M7.3,1 V4.8 H11" fill="#111" stroke="#111" stroke-width="1"/><path d="M3.5,8.6 H8.5 M3.5,11.2 H8.5" stroke="#111" stroke-width="1.4"/></svg>
<span class="t" style="left:304.87px;top:706.80px;font-size:14px;color:#111;transform:scaleX(1.0087);">FN00000070</span>
<span class="t" style="left:386.61px;top:706.80px;font-size:14px;font-weight:700;color:#111;transform:scaleX(0.9813);">MR SCOEMAN, M, MARKUS</span>
<span class="t" style="left:386.23px;top:725.60px;font-size:14px;color:#111;transform:scaleX(1.0127);">0741596485 Male Age: 27 years</span>
<span class="t" style="left:631.41px;top:706.80px;font-size:14px;color:#111;transform:scaleX(0.9697);">PRACTITIONER:</span>
<span class="t" style="left:631.47px;top:725.60px;font-size:14px;color:#111;transform:scaleX(0.9186);">DR G GP</span>
<span class="t" style="left:877.69px;top:706.80px;font-size:14px;font-weight:700;color:#111;transform:scaleX(0.9854);">SCOEMAN, M, MARKUS</span>
<span class="t" style="left:877.37px;top:725.60px;font-size:14px;color:#111;transform:scaleX(1.0064);">BONITAS 123456789</span>
<div class="a ic" style="left:1614px;top:702px;width:29px;background:#fa7a22">C</div>
<div class="a ic" style="left:1646px;top:702px;width:29px;background:#d6344f">D</div>
<div class="a ic" style="left:1678px;top:702px;width:29px;background:#a9a9a9">S</div>
<div class="a ic" style="left:1710px;top:702px;width:24px;background:#a9a9a9">I</div>
<div class="a ic" style="left:1737px;top:702px;width:29px;background:#fa7a22">A</div>
<div class="a ic" style="left:1769px;top:702px;width:28px;background:#d94d3e">V</div>
<div class="a ic" style="left:1800px;top:702px;width:35px;background:#d94d3e"><svg style="position:absolute;left:9.5px;top:4.5px" width="16" height="15" viewBox="0 0 16 15"><circle cx="8" cy="7.3" r="7.3" fill="#fff"/><circle cx="5.6" cy="5.4" r="0.85" fill="#d94d3e"/><circle cx="10.4" cy="5.4" r="0.85" fill="#d94d3e"/><path d="M4.8,11 Q8,8.3 11.2,11" fill="none" stroke="#d94d3e" stroke-width="0.95"/></svg></div>
<div class="a ic" style="left:1838px;top:702px;width:33px;background:#4289ba"><svg style="position:absolute;left:10px;top:5px" width="14" height="14" viewBox="0 0 14 14"><path d="M1.5,0 H11.5 Q13,0 13,1.5 V8 L8,13 H1.5 Q0,13 0,11.5 V1.5 Q0,0 1.5,0 Z" fill="#fff"/><path d="M13,8 L8,13 V9.6 Q8,8 9.6,8 Z" fill="#cfe1f0" stroke="#fff" stroke-width="0.8"/></svg></div>
<div class="a" style="left:3px;top:602px;width:1893px;height:4px;background:#1a74c4;"></div>
<div class="a" style="left:0;top:283px;width:1903px;height:53px;border:8px solid #e60000;border-left-width:7px"></div>
<div class="a" style="left:0;top:688px;width:1901px;height:56px;border:8px solid #e60000;border-left-width:7px"></div>
<div class="a" style="left:1901px;top:107px;width:16px;height:678px;background:#f1f1f1;"></div>
<svg class="a" style="left:1905px;top:113px" width="9" height="6"><path d="M0.5,5.5 L4.5,0.8 L8.5,5.5 Z" fill="#505050"/></svg>
<div class="a" style="left:1903px;top:173px;width:13px;height:411px;background:#c1c1c1;"></div></body></html>
